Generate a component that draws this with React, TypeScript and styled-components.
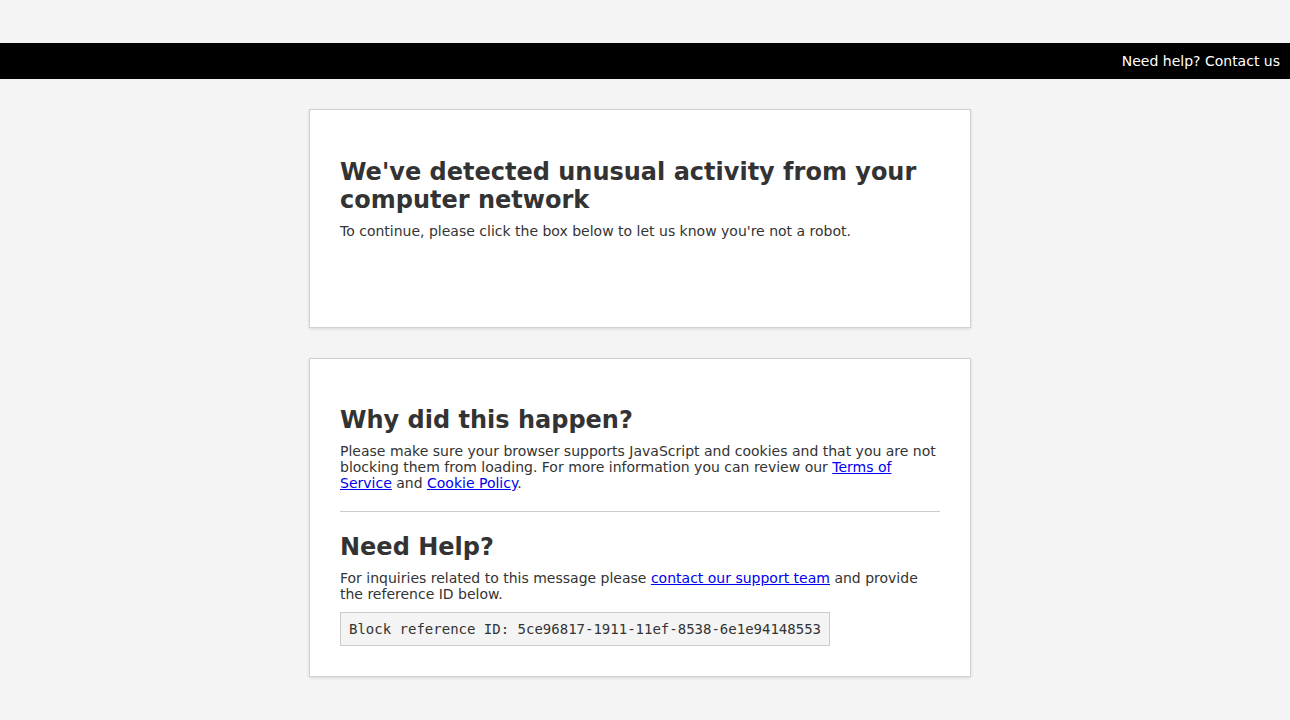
import React from "react";
import styled, { createGlobalStyle } from "styled-components";

const GlobalStyle = createGlobalStyle`
  * { box-sizing: border-box; }
  html, body {
    margin: 0;
    padding: 0;
    background: #f4f4f4;
    font-family: "DejaVu Sans", Verdana, sans-serif;
    color: #333333;
  }
`;

const Page = styled.div`
  min-height: 720px;
  background: #f4f4f4;
`;

const TopStrip = styled.div`
  height: 43px;
`;

const HelpBar = styled.header`
  height: 36px;
  background: #000000;
  display: flex;
  align-items: center;
  justify-content: flex-end;
  padding: 0 10px;
`;

const HelpText = styled.span`
  color: #ffffff;
  font-size: 14px;
`;

const Main = styled.main`
  display: flex;
  flex-direction: column;
  align-items: center;
  gap: 30px;
  padding: 30px 10px 30px 0;
`;

const Card = styled.section`
  width: 662px;
  background: #ffffff;
  border: 1px solid #d0d0d0;
  box-shadow: 0 1px 3px rgba(0, 0, 0, 0.12);
  padding: 30px;
`;

const Title = styled.h1<{ $top?: number }>`
  font-size: 24px;
  font-weight: bold;
  line-height: 28px;
  margin: ${(p) => (p.$top ?? 17)}px 0 9px;
  color: #333333;
`;

const Text = styled.p`
  font-size: 14px;
  line-height: 16px;
  margin: 0;
`;

const Link = styled.a`
  color: #0000ee;
  text-decoration: underline;
`;

const CaptchaSlot = styled.div`
  height: 58px;
`;

const Divider = styled.hr`
  border: none;
  border-top: 1px solid #cccccc;
  margin: 20px 0 21px;
  height: 0;
`;

const RefBox = styled.div`
  display: inline-block;
  margin-top: 10px;
  padding: 8px;
  background: #f4f4f4;
  border: 1px solid #cccccc;
  font-family: "DejaVu Sans Mono", "Liberation Mono", monospace;
  font-size: 14px;
  line-height: 16px;
  color: #333333;
`;

export default function App() {
  return (
    <>
      <GlobalStyle />
      <Page>
        <TopStrip />
        <HelpBar>
          <HelpText>Need help? Contact us</HelpText>
        </HelpBar>
        <Main>
          <Card>
            <Title $top={18}>We've detected unusual activity from your computer network</Title>
            <Text>To continue, please click the box below to let us know you're not a robot.</Text>
            <CaptchaSlot />
          </Card>
          <Card>
            <Title as="h2">Why did this happen?</Title>
            <Text>
              Please make sure your browser supports JavaScript and cookies and that you are not
              blocking them from loading. For more information you can review our{" "}
              <Link href="#">Terms of Service</Link> and <Link href="#">Cookie Policy</Link>.
            </Text>
            <Divider />
            <Title as="h2" $top={0}>Need Help?</Title>
            <Text>
              For inquiries related to this message please{" "}
              <Link href="#">contact our support team</Link> and provide the reference ID below.
            </Text>
            <RefBox>Block reference ID: 5ce96817-1911-11ef-8538-6e1e94148553</RefBox>
          </Card>
        </Main>
      </Page>
    </>
  );
}
